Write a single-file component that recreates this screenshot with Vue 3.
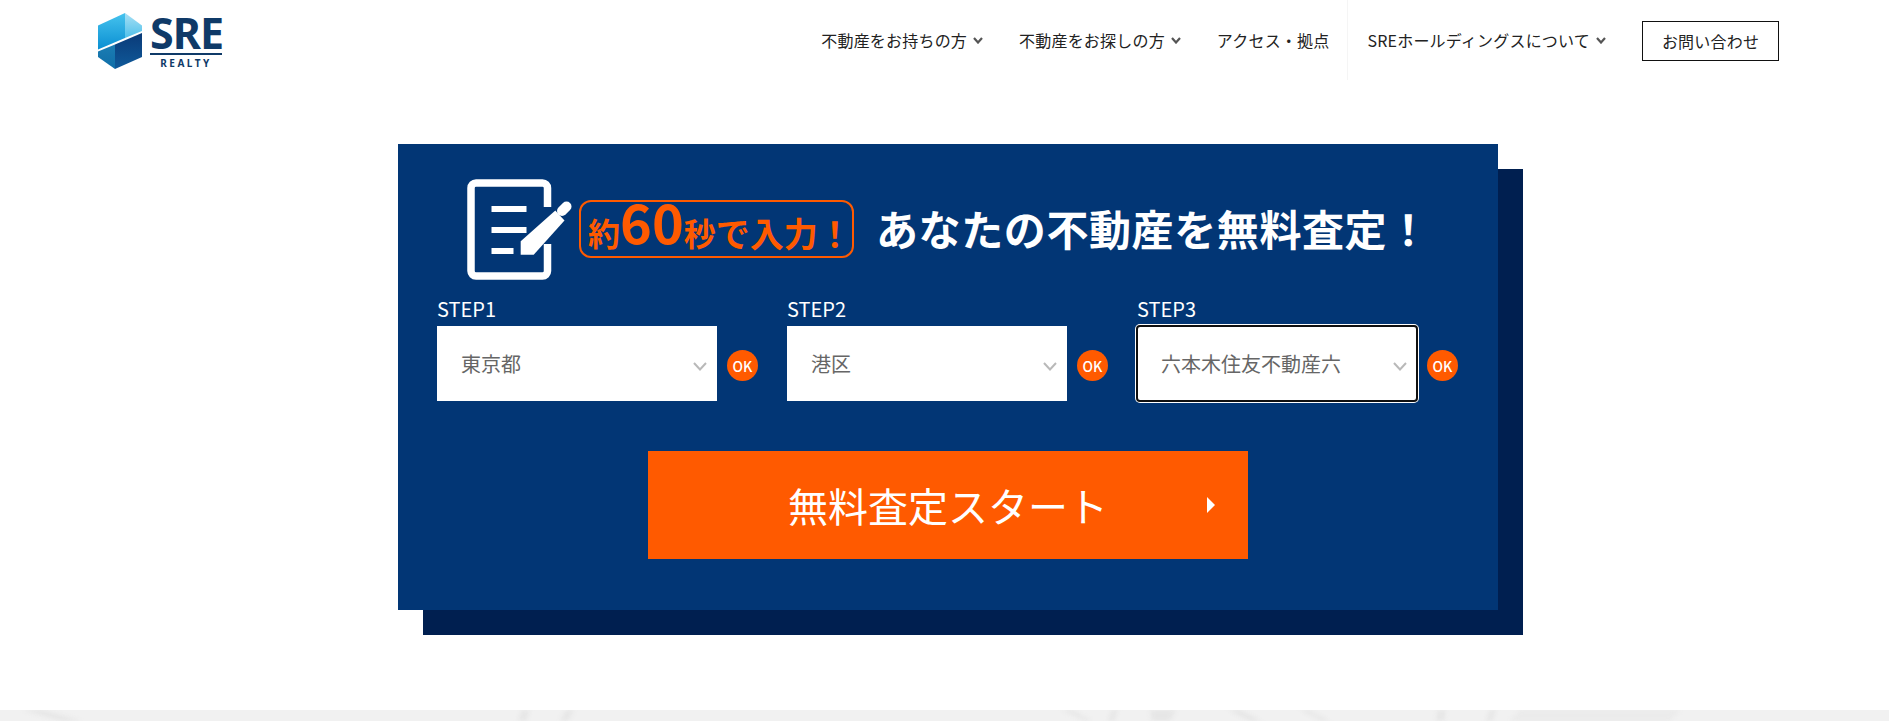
<script setup>
import { ref } from 'vue';

const navItems = [
  { label: '不動産をお持ちの方', arrow: true },
  { label: '不動産をお探しの方', arrow: true },
  { label: 'アクセス・拠点', arrow: false },
  { label: 'SREホールディングスについて', arrow: true, divided: true }
]

const steps = ref([
  { name: 'STEP1', value: '東京都' },
  { name: 'STEP2', value: '港区' },
  { name: 'STEP3', value: '六本木住友不動産六', focused: true }
])
</script>

<template>
  <div class="page">
    <header class="header">
      <a class="logo">
        <svg class="logoMark" width="44" height="56" viewBox="0 0 44 56">
          <defs>
            <linearGradient id="topLeft" x1="0" y1="0" x2="0" y2="1">
              <stop offset="0" stop-color="#46c3ee" />
              <stop offset="1" stop-color="#0a8fd2" />
            </linearGradient>
            <linearGradient id="topRight" x1="0" y1="0" x2="0" y2="1">
              <stop offset="0" stop-color="#a8e0f5" />
              <stop offset="1" stop-color="#4fc0ea" />
            </linearGradient>
            <linearGradient id="botLeft" x1="0" y1="0" x2="0" y2="1">
              <stop offset="0" stop-color="#1b7db3" />
              <stop offset="1" stop-color="#0f6ea8" />
            </linearGradient>
            <linearGradient id="botRight" x1="0" y1="0" x2="0" y2="1">
              <stop offset="0" stop-color="#0a3a78" />
              <stop offset="1" stop-color="#0f5a9a" />
            </linearGradient>
          </defs>
          <path d="M0 12.5 27 0 V25 L0 36.5Z" fill="url(#topLeft)" />
          <path d="M27 0 44 12.500 V18 L27 25Z" fill="url(#topRight)" />
          <path d="M0 38.500 17 31.500 V56 L0 44Z" fill="url(#botLeft)" />
          <path d="M17 31.500 44 20 V44 L17 56Z" fill="url(#botRight)" />
        </svg>
        <div class="logoText">
          <div class="logoSre">SRE</div>
          <div class="logoRealty">REALTY</div>
        </div>
      </a>
      <nav class="nav">
        <div
          v-for="item in navItems"
          :key="item.label"
          :class="item.divided ? 'navItem divided' : 'navItem'"
        >
          <span>{{ item.label }}</span>
          <svg v-if="item.arrow" class="navArrow" width="10" height="7" viewBox="0 0 10 7">
            <path d="M1 1 5 5.500 9 1" fill="none" stroke="#555" stroke-width="2.200" />
          </svg>
        </div>
        <a class="contact">お問い合わせ</a>
      </nav>
    </header>

    <main class="main">
      <section class="card">
        <div class="cardHeading">
          <svg class="formIcon" width="106" height="101" viewBox="0 0 106 101">
            <path
              d="M80.500 28 V9 a5 5 0 0 0 -5 -5 H9 a5 5 0 0 0 -5 5 V92 a5 5 0 0 0 5 5 H75.500 a5 5 0 0 0 5 -5 V65"
              fill="none"
              stroke="#fff"
              stroke-width="7.500"
            />
            <rect x="24.500" y="27" width="35" height="6" fill="#fff" />
            <rect x="24.500" y="48" width="35" height="6" fill="#fff" />
            <rect x="24.500" y="69" width="22" height="6" fill="#fff" />
            <path d="M53.700 75.700 V62.300 L88.300 31.500 L97.500 41.500 L66.700 75.700Z" fill="#fff" />
            <path d="M95 32 99.500 27.500" fill="none" stroke="#fff" stroke-width="10" stroke-linecap="round" />
          </svg>
          <div class="badge">
            <span class="badgeKanji">約</span><span class="badgeNumber">60</span><span class="badgeKanji">秒</span><span class="badgeRest">で入力！</span>
          </div>
          <h2 class="title">あなたの不動産を無料査定！</h2>
        </div>

        <div class="steps">
          <div v-for="step in steps" :key="step.name" class="step">
            <div class="stepLabel">{{ step.name }}</div>
            <div class="stepRow">
              <div class="selectWrap">
                <select :class="step.focused ? 'stepSelect focused' : 'stepSelect'" :value="step.value">
                  <option>{{ step.value }}</option>
                </select>
                <svg class="selectArrow" width="14" height="9" viewBox="0 0 14 9">
                  <path d="M1 1 7 7.500 13 1" fill="none" stroke="#b9b9b9" stroke-width="2" />
                </svg>
              </div>
              <div class="ok">OK</div>
            </div>
          </div>
        </div>

        <button class="startButton">
          <span>無料査定スタート</span>
          <i class="startArrow"></i>
        </button>
      </section>
    </main>

    <div class="band">
      <svg width="1889" height="11" viewBox="0 0 1889 11">
        <g fill="#e0e0e0" opacity="0.6">
          <path d="M22 0H42L82 11H62Z" />
          <path d="M522 0H530L526 11H518Z" />
          <path d="M566 0H574L568 11H560Z" />
          <path d="M1062 0H1072L1092 11H1086Z" />
          <path d="M1112 0H1118L1114 11H1108Z" />
          <path d="M1150 0H1176L1170 11H1152Z" />
          <path d="M1228 0H1240L1262 11H1250Z" />
          <path d="M1300 0H1308L1330 11H1322Z" />
          <path d="M1438 0H1446L1444 11H1436Z" />
          <path d="M1490 0H1496L1492 11H1486Z" />
          <path d="M1520 0H1680L1670 11H1510Z" opacity="0.5" />
        </g>
      </svg>
    </div>
  </div>
</template>

<style scoped>
.page {
  font-family: "Noto Sans CJK JP", "Noto Sans", sans-serif;
  color: #222;
  height: 721px;
  display: flex;
  flex-direction: column;
  overflow: hidden;
}
.header {
  display: flex;
  justify-content: space-between;
  height: 80px;
  padding: 0 110px 0 98px;
}
.logo {
  display: flex;
  gap: 8px;
  padding-top: 13px;
}
.logoMark {
  flex: none;
}
.logoText {
  width: 72px;
  color: #0f3a68;
  text-align: center;
}
.logoSre {
  font-family: "Noto Sans", sans-serif;
  font-size: 43px;
  font-weight: 700;
  line-height: 39px;
  letter-spacing: -1px;
  height: 40px;
  border-bottom: 2px solid #0f3a68;
}
.logoRealty {
  font-family: "Noto Sans", sans-serif;
  font-size: 10px;
  font-weight: 700;
  line-height: 12px;
  letter-spacing: 2.500px;
  margin-top: 2px;
}
.nav {
  display: flex;
  align-items: center;
  font-size: 16px;
  letter-spacing: 0.200px;
}
.navItem {
  display: flex;
  align-items: center;
  gap: 6px;
  height: 80px;
  padding: 0 18px;
  white-space: nowrap;
}
.divided {
  border-left: 1px solid #f5f5f5;
  padding-left: 19px;
}
.navArrow {
  margin-top: 1px;
}
.contact {
  display: flex;
  align-items: center;
  justify-content: center;
  width: 137px;
  height: 40px;
  margin: 2px 0 0 18px;
  border: 1px solid #111;
  box-sizing: border-box;
}
.main {
  flex: 1;
  padding: 64px 0 0 398px;
}
.card {
  width: 1100px;
  height: 466px;
  box-sizing: border-box;
  padding: 35px 39px 0;
  background: #023675;
  box-shadow: 25px 25px 0 #001f50;
}
.cardHeading {
  display: flex;
  align-items: center;
  padding-left: 30px;
  height: 101px;
}
.formIcon {
  flex: none;
  margin-right: 6px;
}
.badge {
  display: flex;
  align-items: center;
  width: 275px;
  height: 58px;
  margin-top: -1px;
  padding-left: 7px;
  box-sizing: border-box;
  border: 2px solid #ff5a00;
  border-radius: 12px;
  color: #ff5a00;
  font-weight: 700;
  white-space: nowrap;
}
.badgeKanji {
  font-size: 32px;
  margin-top: 6px;
}
.badgeNumber {
  font-size: 54px;
  line-height: 50px;
  margin-bottom: 16px;
}
.badgeRest {
  font-size: 34px;
  margin-top: 6px;
}
.title {
  margin: 0 0 5px 22px;
  color: #fff;
  font-size: 42px;
  font-weight: 700;
  letter-spacing: 0.600px;
  white-space: nowrap;
}
.steps {
  display: flex;
  gap: 29px;
  margin-top: 16px;
}
.stepLabel {
  color: #fff;
  font-size: 20px;
  line-height: 26px;
  padding-bottom: 4px;
}
.stepRow {
  display: flex;
  align-items: center;
  gap: 10px;
}
.selectWrap {
  position: relative;
  width: 280px;
  height: 75px;
}
.stepSelect {
  appearance: none;
  display: block;
  width: 100%;
  height: 100%;
  padding: 0 24px;
  border: none;
  border-radius: 0;
  background: #fff;
  color: #666;
  font-family: inherit;
  font-size: 20px;
}
.focused {
  outline: 2px solid #101010;
  outline-offset: -1px;
  border-radius: 3px;
  box-shadow: 0 0 0 2px #fff;
}
.selectArrow {
  position: absolute;
  right: 10px;
  top: 36px;
  pointer-events: none;
}
.ok {
  display: flex;
  align-items: center;
  justify-content: center;
  width: 31px;
  height: 31px;
  margin-top: 4px;
  border-radius: 50%;
  background: #ff5a00;
  color: #fff;
  font-size: 14px;
  font-weight: 500;
}
.startButton {
  display: flex;
  align-items: center;
  justify-content: center;
  position: relative;
  width: 600px;
  height: 108px;
  margin: 50px 0 0 211px;
  border: none;
  background: #ff5a00;
  color: #fff;
  font-family: inherit;
  font-size: 40px;
}
.startArrow {
  position: absolute;
  right: 33px;
  top: 46px;
  border-left: 8px solid #fff;
  border-top: 8px solid transparent;
  border-bottom: 8px solid transparent;
}
.band {
  height: 11px;
  background: #f1f1f1;
  line-height: 0;
  overflow: hidden;
}
.band svg {
  filter: blur(2px);
}
</style>
